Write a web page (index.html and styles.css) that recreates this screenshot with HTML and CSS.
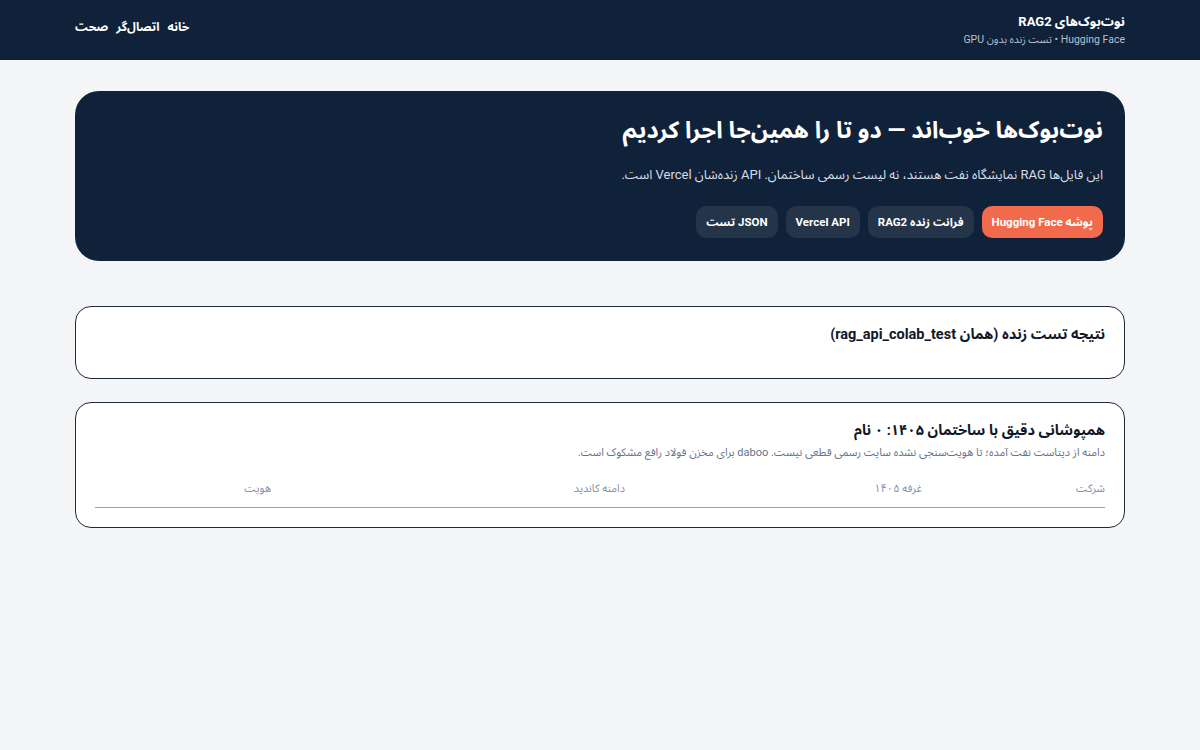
FILE: index.html
```html
<!DOCTYPE html>
<html lang="fa" dir="rtl">
<head>
  <meta charset="UTF-8" />
  <meta name="viewport" content="width=device-width, initial-scale=1" />
  <title>نوت‌بوک‌های RAG2</title>
  <link rel="stylesheet" href="styles.css">
</head>
<body>
  <header class="topbar">
    <div class="container topbar-inner">
      <div class="brand">
        <div class="brand-title">نوت‌بوک‌های RAG2</div>
        <div class="brand-sub">Hugging Face • تست زنده بدون GPU</div>
      </div>
      <nav class="top-nav">
        <a href="#">خانه</a>
        <a href="#">اتصال‌گر</a>
        <a href="#">صحت</a>
      </nav>
    </div>
  </header>

  <main class="container">
    <section class="hero">
      <h1>نوت‌بوک‌ها خوب‌اند — دو تا را همین‌جا اجرا کردیم</h1>
      <p>این فایل‌ها RAG نمایشگاه نفت هستند، نه لیست رسمی ساختمان. API زنده‌شان Vercel است.</p>
      <div class="hero-actions">
        <a class="btn btn-primary" href="#">پوشه Hugging Face</a>
        <a class="btn" href="#">فرانت زنده RAG2</a>
        <a class="btn" href="#">Vercel API</a>
        <a class="btn" href="#">JSON تست</a>
      </div>
    </section>

    <section class="card card-live">
      <h2>نتیجه تست زنده (همان rag_api_colab_test)</h2>
    </section>

    <section class="card">
      <h2>همپوشانی دقیق با ساختمان ۱۴۰۵: ۰ نام</h2>
      <p class="muted">دامنه از دیتاست نفت آمده؛ تا هویت‌سنجی نشده سایت رسمی قطعی نیست. daboo برای مخزن فولاد رافع مشکوک است.</p>
      <table class="overlap">
        <thead>
          <tr>
            <th class="col-company">شرکت</th>
            <th class="col-booth">غرفه ۱۴۰۵</th>
            <th class="col-domain">دامنه کاندید</th>
            <th>هویت</th>
          </tr>
        </thead>
        <tbody></tbody>
      </table>
    </section>
  </main>
</body>
</html>
```

FILE: styles.css
```css
:root {
  --navy: #10223a;
  --navy-soft: #243449;
  --page: #f4f5f7;
  --ink: #111827;
  --muted: #64748b;
  --orange: #f06a4b;
  --line: #1f2937;
}
* {
  margin: 0; padding: 0; box-sizing: border-box;
}
body {
  font-family: Roboto, "Noto Sans Arabic", "Noto Sans", sans-serif;
  background-color: var(--page);
  color: var(--ink);
  min-height: 100vh;
}
.container {
  width: 1050px;
  margin: 0 auto;
}

/* top bar */
.topbar {
  background-color: var(--navy);
  height: 60px;
}
.topbar-inner {
  height: 100%;
  display: flex; justify-content: space-between; align-items: center;
}
.brand-title {
  color: #fff;
  font-weight: 700;
  font-size: 13px;
  line-height: 18px;
}
.brand-sub {
  color: #b6c0cf;
  font-size: 10.5px;
  line-height: 16px;
  margin-top: 1px;
}
.top-nav {
  display: flex; gap: 8px;
  margin-top: -5px;
}
.top-nav a {
  color: #fff;
  text-decoration: none;
  font-weight: 700;
  font-size: 12px;
}

main {
  padding: 31px 0 40px;
}

/* hero */
.hero {
  background-color: var(--navy);
  color: #fff;
  border-radius: 24px;
  padding: 22px 22px;
  height: 170px;
}
.hero h1 {
  font-size: 23.5px;
  font-weight: 700;
  line-height: 34px;
}
.hero p {
  color: #d7dde6;
  font-size: 13px;
  line-height: 20px;
  margin-top: 18px;
}
.hero-actions {
  display: flex; gap: 8px;
  margin-top: 21px;
}
.btn {
  display: inline-flex; align-items: center;
  height: 32px;
  padding: 0 10px;
  border-radius: 10px;
  background-color: var(--navy-soft);
  color: #fff;
  text-decoration: none;
  font-size: 11.5px;
  font-weight: 700;
}
.btn-primary {
  background-color: var(--orange);
}

/* cards */
.card {
  background-color: #fff;
  border: 1px solid var(--line);
  border-radius: 16px;
  padding: 17px 19px 19px;
  margin-top: 23px;
}
.card-live {
  margin-top: 45px;
  height: 73px;
}
.card h2 {
  font-size: 14.5px;
  font-weight: 700;
  line-height: 22px;
}
.muted {
  color: var(--muted);
  font-size: 11px;
  line-height: 18px;
  margin-top: 2px;
}
table.overlap {
  width: 100%;
  border-collapse: collapse;
  margin-top: 15px;
}
table.overlap th {
  text-align: right;
  color: #8391a5;
  font-weight: 400;
  font-size: 11px;
  padding: 0 0 7px;
  border-bottom: 1px solid #9aa3b2;
}
.col-company { width: 183px; }
.col-booth { width: 297px; }
.col-domain { width: 354px; }
```
